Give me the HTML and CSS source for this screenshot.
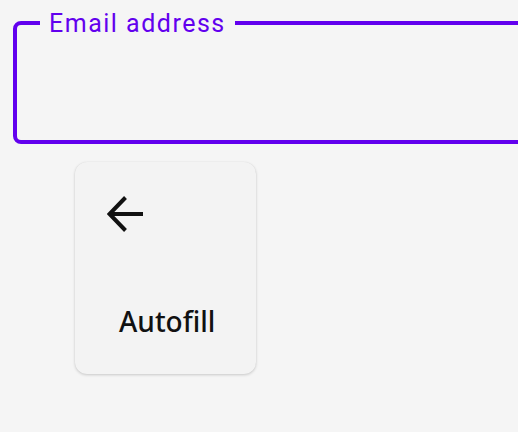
FILE: index.html
```html
<!DOCTYPE html>
<html>
<head>
<meta charset="utf-8">
<link rel="stylesheet" href="styles.css">
</head>
<body>
<div class="field">
  <span class="field-label">Email address</span>
</div>
<div class="card">
  <svg class="back-icon" width="36" height="36" viewBox="0 0 36 36" fill="none" stroke="#111" stroke-width="4">
    <path d="M3 18 H36"/>
    <path d="M18.5 1.5 L2.5 18 L18.5 34.5"/>
  </svg>
  <div class="card-label">Autofill</div>
</div>
</body>
</html>
```
FILE: styles.css
```css
html, body {
  margin: 0;
  padding: 0;
  background: #f5f5f5;
  overflow: hidden;
}
body {
  width: 518px;
  height: 432px;
  padding-top: 21px;
  box-sizing: border-box;
}
.field {
  position: relative;
  margin-left: 13px;
  width: 620px;
  height: 123px;
  box-sizing: border-box;
  border: 4px solid #6200ee;
  border-radius: 8px;
}
.field-label {
  position: absolute;
  top: -15px;
  left: 23px;
  padding: 0 9px 0 9px;
  background: #f5f5f5;
  font-family: Roboto, "Liberation Sans", sans-serif;
  font-size: 25px;
  line-height: 28px;
  letter-spacing: 1.5px;
  color: #6200ee;
}
.card {
  margin-top: 18px;
  margin-left: 75px;
  width: 181px;
  height: 212px;
  box-sizing: border-box;
  padding: 34px 0 0 32px;
  border-radius: 12px;
  background: #f3f3f3;
  box-shadow: 0 1px 3px rgba(0,0,0,0.18), 0 0 1px rgba(0,0,0,0.08);
  display: flex;
  flex-direction: column;
  align-items: flex-start;
}
.back-icon {
  display: block;
}
.card-label {
  margin-top: 72px;
  margin-left: 12px;
  font-family: "Noto Sans", "Open Sans", sans-serif;
  font-size: 28px;
  font-weight: 500;
  line-height: 34px;
  color: #111;
}
```
